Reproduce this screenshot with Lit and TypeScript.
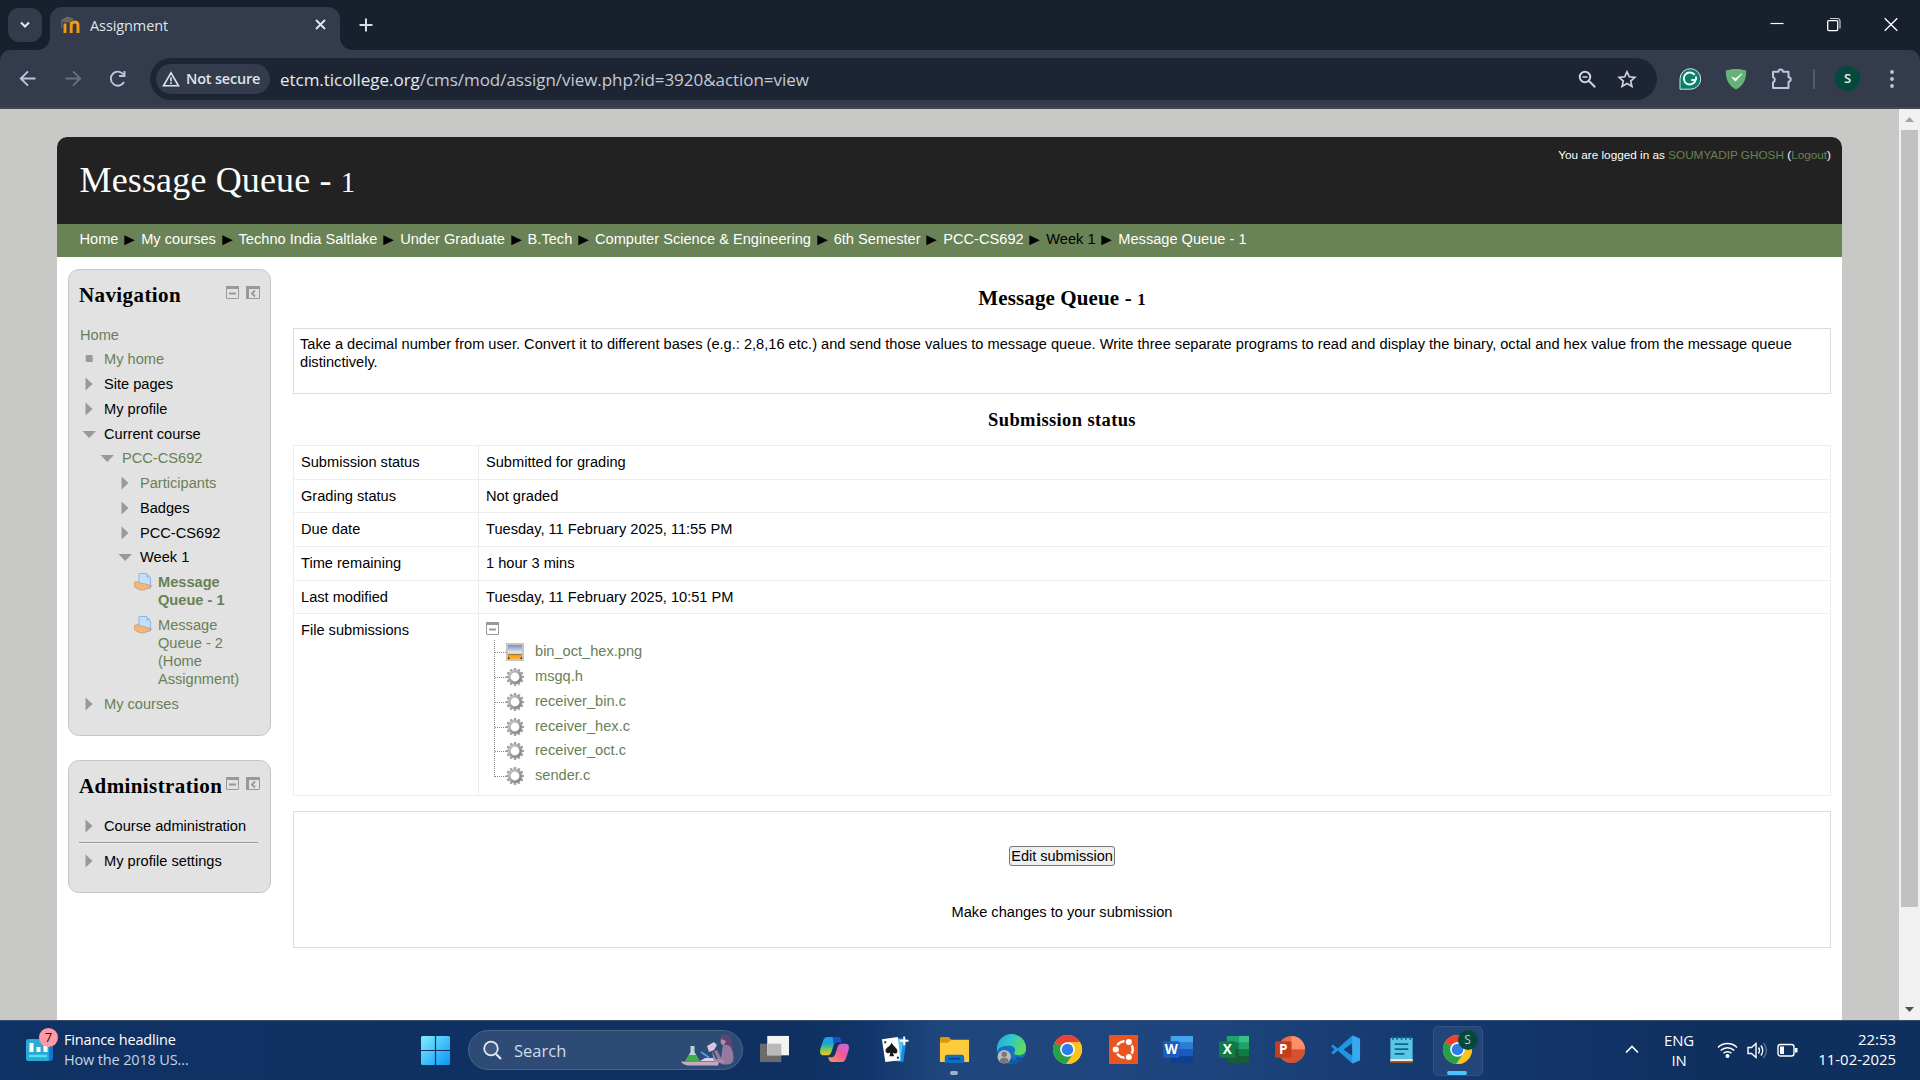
import { LitElement, html, css, svg } from "lit";
import { customElement } from "lit/decorators.js";
import { classMap } from "lit/directives/class-map.js";

@customElement("browser-chrome")
export class BrowserChrome extends LitElement {
  static styles = css`
    :host { display: block; font-family: "Open Sans", "Noto Sans", sans-serif; color: #dfe3ea; }
    svg { display: block; flex: none; }
    .tabs { display: flex; height: 50px; background: #18202e; }
    .drop { width: 34px; height: 34px; margin: 8px 0 0 8px; border-radius: 11px; background: #333b4c; display: grid; place-items: center; }
    .tab { position: relative; display: flex; align-items: center; width: 290px; height: 43px; margin: 7px 0 0 8px; box-sizing: border-box; padding: 0 13px 8px 11px; border-radius: 12px 12px 0 0; background: #333b4c; }
    .tab::before, .tab::after { content: ""; position: absolute; bottom: 0; width: 12px; height: 12px; }
    .tab::before { left: -12px; background: radial-gradient(circle at 0 0, #18202e 11.5px, #333b4c 12px); }
    .tab::after { right: -12px; background: radial-gradient(circle at 100% 0, #18202e 11.5px, #333b4c 12px); }
    .title { flex: 1; margin-left: 10px; font-size: 14.5px; letter-spacing: -0.1px; padding-top: 1px; }
    .plus { margin: 18px 0 0 19px; }
    .wins { margin: 16px 22px 0 auto; display: flex; gap: 43px; }
    .corner { background: #18202e; }
    .bar { display: flex; align-items: center; height: 57px; background: #333b4c; border-bottom: 2px solid #434855; border-radius: 10px 10px 0 0; box-sizing: content-box; }
    .nav { display: flex; gap: 21px; margin-left: 16px; }
    .omni { display: flex; align-items: center; box-sizing: border-box; width: 1507px; height: 42px; margin-left: 20px; padding: 0 20px 0 6px; border-radius: 21px; background: #1d2535; }
    .chip { display: flex; align-items: center; gap: 6px; width: 114px; height: 30px; box-sizing: border-box; padding-left: 6px; border-radius: 15px; background: #333b4c; font-size: 14.5px; font-weight: 600; letter-spacing: -0.2px; white-space: nowrap; }
    .url { flex: 1; margin-left: 10px; font-size: 17px; letter-spacing: -0.04px; color: #c5cad3; white-space: nowrap; padding-top: 1px; }
    .host { color: #e6e9ef; }
    .tools { display: flex; gap: 21px; }
    .ext { display: flex; align-items: center; gap: 24px; margin-left: 22px; }
    .sep { width: 2px; height: 20px; margin-left: -4px; margin-right: -3px; background: #505a6d; }
    .ava { width: 25px; height: 25px; border-radius: 50%; background: #04493c; color: #e4efe9; font-size: 13px; font-weight: 600; line-height: 25px; text-align: center; margin-left: -1px; }
    .dots { margin-left: 6px; }
  `;
  render() {
    return html`
      <div class="tabs">
        <div class="drop"><svg width="12" height="10" viewBox="0 0 12 10"><path d="M2 2.5l4 4 4-4" fill="none" stroke="#e6e9ef" stroke-width="2"/></svg></div>
        <div class="tab">
          <svg width="19" height="18" viewBox="0 0 19 18">
            <path d="M4 17V7.500M10.200 17V6M10.200 9c0-4 6.800-4 6.800 0v8" fill="none" stroke="#f59a15" stroke-width="2.900"/>
            <path d="M.5 4.500L6 1.200l6 1.500L8 5.500 4.500 6zM.8 5v7" fill="#66635c" stroke="#77736a" stroke-width="1"/>
          </svg>
          <span class="title">Assignment</span>
          <svg width="13" height="13" viewBox="0 0 13 13"><path d="M2 2l9 9M11 2l-9 9" stroke="#e6e9ef" stroke-width="1.800"/></svg>
        </div>
        <svg class="plus" width="14" height="14" viewBox="0 0 14 14"><path d="M7 .5v13M.5 7h13" stroke="#d5deee" stroke-width="2"/></svg>
        <div class="wins">
          <svg width="14" height="16" viewBox="0 0 14 16"><path d="M.5 7.500h13" stroke="#fff" stroke-width="1.200"/></svg>
          <svg width="14" height="16" viewBox="0 0 14 16"><path d="M3 2.500h7.500a2.500 2.500 0 0 1 2.500 2.500v7.500" fill="none" stroke="#c9cdd4" stroke-width="1.200"/><rect x=".7" y="4.600" width="10" height="10" rx="1" fill="none" stroke="#fff" stroke-width="1.300"/></svg>
          <svg width="14" height="16" viewBox="0 0 14 16"><path d="M.7 2.200l12.600 12.600M13.300 2.200L.7 14.800" stroke="#fff" stroke-width="1.300"/></svg>
        </div>
      </div>
      <div class="corner"><div class="bar">
        <div class="nav">
          <svg width="24" height="24" viewBox="0 0 24 24"><path d="M19.500 11.500H5M12 4.300L4.800 11.500l7.200 7.200" fill="none" stroke="#bac7dd" stroke-width="1.900"/></svg>
          <svg width="24" height="24" viewBox="0 0 24 24"><path d="M4.500 11.500H19M12 4.300l7.200 7.200-7.200 7.200" fill="none" stroke="#687082" stroke-width="1.900"/></svg>
          <svg width="24" height="24" viewBox="0 0 24 24"><path d="M18 15a7 7 0 1 1-.6-7.600M18.500 4v5h-5.400" fill="none" stroke="#bac7dd" stroke-width="1.900"/></svg>
        </div>
        <div class="omni">
          <div class="chip">
            <svg width="18" height="16" viewBox="0 0 18 16"><path d="M9 1.800L16.500 14.800h-15z" fill="none" stroke="#dfe3ea" stroke-width="1.600"/><path d="M9 6.300v4M9 11.300v1.700" stroke="#dfe3ea" stroke-width="1.600"/></svg>
            Not secure
          </div>
          <div class="url"><span class="host">etcm.ticollege.org</span>/cms/mod/assign/view.php?id=3920&amp;action=view</div>
          <div class="tools">
            <svg width="18" height="18" viewBox="0 0 18 18"><g fill="none" stroke="#cfd2da" stroke-width="2"><circle cx="7" cy="7" r="5.200"/><path d="M11 11l6.200 6.200"/><path d="M4.500 7h5" stroke-width="1.600"/></g></svg>
            <svg width="20" height="18" viewBox="0 0 20 18" ><path d="M10 1.800l2.300 5 5.500.5-4.100 3.700 1.200 5.400L10 13.600l-4.900 2.800 1.200-5.400L2.200 7.300l5.500-.5z" fill="none" stroke="#cfd2da" stroke-width="1.700"/></svg>
          </div>
        </div>
        <div class="ext">
          <svg width="22" height="22" viewBox="0 0 22 22"><path d="M11.500.7a10.200 10.200 0 1 1 0 20.500H1V11A10.300 10.300 0 0 1 11.500.7z" fill="#08806b" stroke="#cde5df" stroke-width="1"/><path d="M15.600 6.900a6 6 0 1 0 1 5.100h-4.300M17 8.600v3.400" fill="none" stroke="#fff" stroke-width="1.900"/></svg>
          <svg width="22" height="22" viewBox="0 0 22 22"><path d="M11 .9c4 0 7 .6 10.200 1.600C21.200 12 18.500 17.500 11 21.500 3.500 17.500.8 12 .8 2.500 4 1.500 7 .9 11 .9z" fill="#67b279"/><path d="M6.800 9l3.600 4.200 6.400-7.400-6.200 5z" fill="#fff" stroke="#fff" stroke-width=".8"/></svg>
          <svg width="22" height="22" viewBox="0 0 22 22"><path d="M2 3.700h5.500a2.200 2.200 0 0 1 4.400 0h5.600v5.600a2.200 2.200 0 0 1 0 4.400v6.300H2v-5.500a3 3 0 0 0 0-5.500z" fill="none" stroke="#bac7dd" stroke-width="2" stroke-linejoin="round"/></svg>
          <div class="sep"></div>
          <div class="ava">S</div>
          <svg class="dots" width="4" height="20" viewBox="0 0 4 20"><g fill="#bac7dd"><circle cx="2" cy="3" r="1.900"/><circle cx="2" cy="10" r="1.900"/><circle cx="2" cy="17" r="1.900"/></g></svg>
        </div>
      </div></div>
    `;
  }
}

type Mark = "none" | "dot" | "right" | "down" | "task";
interface NavItem { text: string; depth: number; mark: Mark; link?: boolean; bold?: boolean; }

const navItems: NavItem[] = [
  { text: "My home", depth: 0, mark: "dot", link: true },
  { text: "Site pages", depth: 0, mark: "right" },
  { text: "My profile", depth: 0, mark: "right" },
  { text: "Current course", depth: 0, mark: "down" },
  { text: "PCC-CS692", depth: 1, mark: "down", link: true },
  { text: "Participants", depth: 2, mark: "right", link: true },
  { text: "Badges", depth: 2, mark: "right" },
  { text: "PCC-CS692", depth: 2, mark: "right" },
  { text: "Week 1", depth: 2, mark: "down" },
  { text: "Message Queue - 1", depth: 3, mark: "task", link: true, bold: true },
  { text: "Message Queue - 2 (Home Assignment)", depth: 3, mark: "task", link: true },
  { text: "My courses", depth: 0, mark: "right", link: true },
];

const crumbs = ["Home", "My courses", "Techno India Saltlake", "Under Graduate", "B.Tech",
  "Computer Science & Engineering", "6th Semester", "PCC-CS692", "Week 1", "Message Queue - 1"];

const statusRows: [string, string][] = [
  ["Submission status", "Submitted for grading"],
  ["Grading status", "Not graded"],
  ["Due date", "Tuesday, 11 February 2025, 11:55 PM"],
  ["Time remaining", "1 hour 3 mins"],
  ["Last modified", "Tuesday, 11 February 2025, 10:51 PM"],
];

const files = ["bin_oct_hex.png", "msgq.h", "receiver_bin.c", "receiver_hex.c", "receiver_oct.c", "sender.c"];

const minusIcon = html`<svg width="13" height="13" viewBox="0 0 13 13"><rect x=".5" y=".5" width="12" height="12" rx=".5" fill="none" stroke="#999"/><path d="M0 0h13v3H0z" fill="#999"/><path d="M3 7.500h7" stroke="#999" stroke-width="2"/></svg>`;
const dockIcon = html`<svg width="14" height="13" viewBox="0 0 14 13"><rect x=".5" y=".5" width="13" height="12" rx=".5" fill="none" stroke="#999"/><path d="M0 0h14v3H0zM0 0h3v13H0z" fill="#999"/><path d="M9 4.500L6 7.500l3 3" fill="none" stroke="#999" stroke-width="1.900"/></svg>`;

const marks = {
  none: "",
  dot: html`<svg width="18" height="18" viewBox="0 0 18 18"><rect x="5.700" y="5" width="7" height="7" rx="1" fill="#999"/></svg>`,
  right: html`<svg width="18" height="18" viewBox="0 0 18 18"><path d="M5.500 2.500L12.500 9l-7 6.500z" fill="#999"/></svg>`,
  down: html`<svg width="18" height="18" viewBox="0 0 18 18"><path d="M2.500 6h13.500L9.200 13z" fill="#999"/></svg>`,
  task: html`<svg width="18" height="18" viewBox="0 0 18 18"><path d="M5 .5h7.500l4 4V15H5z" fill="#c3e0f8" stroke="#8fb4ec"/><path d="M12.500.5v4h4z" fill="#8ec0f2"/><path d="M.3 9.500c3-1.500 4.500-.5 6.500.5 2 1 5 .4 6 1.600l4.800 1.200c-1 2-3.500 2-5 3-3 2-7 2-12.300-2.300z" fill="#efb883" stroke="#c98f55" stroke-width=".7"/></svg>`,
};

const teeth = Array.from({ length: 12 }, (_, i) =>
  svg`<path d="M7.900 0h2.200l.5 4H7.400z" transform="rotate(${i * 30} 9 9)"/>`);
const gearIcon = html`<svg width="18" height="18" viewBox="0 0 18 18"><defs><linearGradient id="gear" x1="0" y1="0" x2="1" y2="1"><stop offset="0" stop-color="#c8c8c8"/><stop offset="1" stop-color="#7d7d7d"/></linearGradient></defs><g fill="#a2a2a2">${teeth}</g><circle cx="9" cy="9" r="5.700" fill="none" stroke="url(#gear)" stroke-width="2.600"/></svg>`;
const pictureIcon = html`<svg width="18" height="18" viewBox="0 0 18 18"><defs><linearGradient id="dusk" x1="0" y1="0" x2="0" y2="1"><stop offset="0" stop-color="#6f93c7"/><stop offset=".55" stop-color="#e8eaea"/><stop offset=".62" stop-color="#f6c85c"/><stop offset=".7" stop-color="#8a6420"/><stop offset=".75" stop-color="#f2a014"/><stop offset="1" stop-color="#f7b73a"/></linearGradient></defs><path d="M0 0h18v18H0z" fill="#c6c6c6"/><path d="M2 2h14v14H2z" fill="url(#dusk)"/><path d="M2 13.500l2 2.500H2zM16 13.500L14 16h2z" fill="#3a2a12"/></svg>`;

@customElement("course-page")
export class CoursePage extends LitElement {
  static styles = css`
    :host { display: flex; height: 911px; background: #c8c8c6; font-family: "Liberation Sans", Arial, sans-serif; font-size: 14.62px; line-height: 18px; color: #000; overflow: hidden; }
    svg { display: block; flex: none; }
    .view { flex: 1; padding: 28px 57px 0; }
    .card { height: 883px; background: #fff; border-radius: 10px 10px 0 0; overflow: hidden; }
    .head { display: flex; justify-content: space-between; height: 87px; background: #222; color: #fff; box-sizing: border-box; padding: 0 11px 0 22.500px; }
    h1, h2, h3 { margin: 0; font-family: Georgia, "Liberation Serif", serif; white-space: nowrap; }
    h1 { font-size: 36px; font-weight: 400; line-height: 40px; margin-top: 23px; letter-spacing: 0.15px; }
    .one { font-size: 0.8em; line-height: 0; }
    .login { font-size: 11.750px; line-height: 16px; margin-top: 10px; white-space: nowrap; }
    .login .link { color: #698255; }
    .link { color: #698056; }
    .crumbs { display: flex; align-items: center; height: 33px; padding: 0 22.500px 3px; box-sizing: border-box; background: #698256; color: #fff; white-space: nowrap; }
    .arrow { margin: 1px 5.850px 0; }
    .dark { color: #000; }
    .cols { display: flex; align-items: flex-start; gap: 22px; padding: 12px 11px 0; }
    .side { width: 203px; display: flex; flex-direction: column; gap: 24px; flex: none; }
    .block { box-sizing: border-box; border: 1px solid #c6c6c6; border-radius: 11px; background: #e2e2e2; padding: 15px 10px 0; }
    .navblock { height: 467px; }
    .admblock { height: 133px; }
    .bhead { display: flex; justify-content: space-between; height: 24px; }
    .bhead .icons { display: flex; gap: 7px; padding-top: 1px; }
    h2 { font-size: 21px; line-height: 23px; letter-spacing: 0.4px; margin-top: -1px; width: 140px; }
    .list { display: flex; flex-direction: column; gap: 6.750px; margin-top: 16.700px; padding-left: 1px; }
    .item { display: flex; gap: 6px; padding-right: 15px; }
    .d1 { padding-left: 18px; }
    .d2 { padding-left: 36px; }
    .d3 { padding-left: 54px; }
    .bold { font-weight: 700; }
    .adm { padding-top: 17px; }
    .adm .item { padding: 0 0 0 1px; white-space: nowrap; }
    .rule { border-top: 1px solid #999; border-bottom: 1px solid #eee; margin: 7px 2px 8px 0; }
    .main { flex: 1; display: flex; flex-direction: column; min-width: 0; }
    .main h3 { text-align: center; }
    .h-a { font-size: 21px; line-height: 22px; height: 22px; padding: 18px 0 19px; letter-spacing: 0.120px; }
    .h-b { font-size: 18.500px; line-height: 20px; padding: 16px 0 15px; letter-spacing: 0.380px; }
    .intro { box-sizing: border-box; height: 66px; border: 1px solid #ddd; padding: 6px; }
    .grid { display: grid; grid-template-columns: 185px 1fr; border: 1px solid #eee; border-bottom: 0; height: 351px; box-sizing: border-box; grid-template-rows: repeat(5, 33.700px) 1fr; }
    .cell { border-bottom: 1px solid #eee; padding: 7px 7px 0; }
    .cell.k { border-right: 1px solid #eee; }
    .top { padding-top: 8px; }
    .tree { position: relative; display: flex; flex-direction: column; gap: 6.700px; padding: 8px 0 0 20px; }
    .tree::before { content: ""; position: absolute; left: 8px; top: 5px; height: 137px; border-left: 1px dotted #888; }
    .file { position: relative; display: flex; gap: 11px; height: 18px; }
    .file::before { content: ""; position: absolute; left: -11px; top: 9px; width: 11px; border-top: 1px dotted #888; }
    .file span { position: relative; top: -1px; }
    .edit { box-sizing: border-box; height: 137px; margin-top: 15px; border: 1px solid #ddd; display: flex; flex-direction: column; align-items: center; padding-top: 34px; gap: 37px; }
    button { box-sizing: border-box; height: 20px; width: 106px; padding: 0; border: 1px solid #767676; border-radius: 3px; background: #efefef; font: 14.500px/16px "Liberation Sans", Arial, sans-serif; color: #000; white-space: nowrap; }
    .scroll { width: 21px; background: #f1f1f1; display: flex; flex-direction: column; align-items: center; justify-content: space-between; }
    .scroll .thumb { width: 17px; height: 777px; background: #c1c1c1; margin-bottom: auto; }
    .scroll .btn { height: 21px; display: grid; place-items: center; }
  `;
  render() {
    return html`
      <div class="view"><div class="card">
        <div class="head">
          <h1>Message Queue - <span class="one">1</span></h1>
          <div class="login">You are logged in as <span class="link">SOUMYADIP GHOSH</span> (<span class="link">Logout</span>)</div>
        </div>
        <div class="crumbs">
          ${crumbs.map((c, i) => html`${i ? html`<svg class="arrow" width="11" height="12" viewBox="0 0 11 12"><path d="M.3 1.200L10.800 6.200.3 11.200z"/></svg>` : ""}<span class=${classMap({ dark: c === "Week 1" })}>${c}</span>`)}
        </div>
        <div class="cols">
          <div class="side">
            <div class="block navblock">
              <div class="bhead"><h2>Navigation</h2><div class="icons">${minusIcon}${dockIcon}</div></div>
              <div class="list">
                <div class="link">Home</div>
                ${navItems.map((n) => html`<div class=${classMap({ item: true, ["d" + n.depth]: true, link: !!n.link, bold: !!n.bold })}>${marks[n.mark]}<span>${n.text}</span></div>`)}
              </div>
            </div>
            <div class="block admblock">
              <div class="bhead"><h2>Administration</h2><div class="icons">${minusIcon}${dockIcon}</div></div>
              <div class="adm">
                <div class="item">${marks.right}<span>Course administration</span></div>
                <div class="rule"></div>
                <div class="item">${marks.right}<span>My profile settings</span></div>
              </div>
            </div>
          </div>
          <div class="main">
            <h3 class="h-a">Message Queue - <span class="one">1</span></h3>
            <div class="intro">Take a decimal number from user. Convert it to different bases (e.g.: 2,8,16 etc.) and send those values to message queue. Write three separate programs to read and display the binary, octal and hex value from the message queue distinctively.</div>
            <h3 class="h-b">Submission status</h3>
            <div class="grid">
              ${statusRows.map(([k, v]) => html`<div class="cell k">${k}</div><div class="cell">${v}</div>`)}
              <div class="cell k">File submissions</div>
              <div class="cell top">${minusIcon}
                <div class="tree">${files.map((f, i) => html`<div class="file">${i ? gearIcon : pictureIcon}<span class="link">${f}</span></div>`)}</div>
              </div>
            </div>
            <div class="edit"><button>Edit submission</button><div>Make changes to your submission</div></div>
          </div>
        </div>
      </div></div>
      <div class="scroll">
        <div class="btn"><svg width="9" height="5" viewBox="0 0 9 5"><path d="M0 5L4.500 0 9 5z" fill="#a3a3a3"/></svg></div>
        <div class="thumb"></div>
        <div class="btn"><svg width="9" height="5" viewBox="0 0 9 5"><path d="M0 0l4.500 5L9 0z" fill="#505050"/></svg></div>
      </div>
    `;
  }
}

const chromeIcon = svg`
  <circle cx="16" cy="16" r="15" fill="#fbc116"/>
  <path d="M16 16L3 8.500A15 15 0 0 0 14.500 30.900L22.500 19.700z" fill="#26a148"/>
  <path d="M16 16L3 8.500A15 15 0 0 1 29 8.500H16z" fill="#ea4335"/>
  <path d="M16 8.500h13A15 15 0 0 1 15 31l7.500-11.500z" fill="#fcc31e"/>
  <circle cx="16" cy="16" r="7.500" fill="#fff"/><circle cx="16" cy="16" r="6" fill="#2f7de9"/>`;

const apps = [
  svg`<path d="M1 10h22v19H1z" fill="#6b6b6b"/><path d="M8.500 2h22.500v20H8.500z" fill="#f3f3f3"/><path d="M8.500 10h14.500v12H8.500z" fill="#b9b9b9"/>`,
  svg`<defs>
      <linearGradient id="cpA" x1="0" y1="0" x2="0" y2="1"><stop offset="0" stop-color="#1f9cf0"/><stop offset=".35" stop-color="#16a5d8"/><stop offset=".7" stop-color="#7ccb4a"/><stop offset="1" stop-color="#f4c62d"/></linearGradient>
      <linearGradient id="cpB" x1="1" y1="0" x2="0" y2="1"><stop offset="0" stop-color="#b76cf5"/><stop offset=".45" stop-color="#f0579a"/><stop offset="1" stop-color="#fb9a4a"/></linearGradient></defs>
    <path d="M9 3h9c3 0 4 2 4.500 5h-3c-3 0-4 2-5 5.500L13 18c-1 3-2 4-5 4H5c-4 0-4.500-3-3.500-7L4 7.500C5 4 6.500 3 9 3z" fill="url(#cpA)"/>
    <path d="M14 3h5c3 0 3.500 2 4 5h-4c-2.500 0-3.500 1-4 3z" fill="#1b4fd0"/>
    <path d="M23 29h-9c-3 0-4-2-4.500-5h3c3 0 4-2 5-5.500L19 14c1-3 2-4 5-4h3c4 0 4.500 3 3.500 7L28 24.500C27 28 25.500 29 23 29z" fill="url(#cpB)"/>`,
  svg`<path d="M16 4l12.500 1L25 29l-8-1z" fill="#1490df"/><path d="M20 5l5 .500L22 28l-4-1z" fill="#55c5f7"/><path d="M3 5.500L19.500 3l2.500 24-15.500 2z" fill="#fff"/><path d="M13 9c2 4 6 5.500 6 8.700 0 2.500-3 3.300-4.800 1.300l1.500 4h-5l1-4c-2 1.500-5 .8-5-1.700C6.700 14 11.500 13 13 9z" fill="#191919"/><path d="M5.500 7.500h2v2h-2zM18.500 23.500h2v2h-2z" fill="#222"/><path d="M26 2.500v9M21.500 7h9" stroke="#fff" stroke-width="2"/>`,
  svg`<path d="M1 5c0-1.500.5-2 2-2h7l4 4v6H1z" fill="#d99a07"/><path d="M1 9h8l4-3h18v23H1z" fill="#fdcb3b"/><path d="M6 30v-6c0-1.500 1-2.500 2.500-2.500h15c1.500 0 2.500 1 2.500 2.500v6z" fill="#0c6fc4"/><path d="M10 25.500h12" stroke="#0a3f85" stroke-width="1.500"/>`,
  svg`<defs><linearGradient id="edA" x1="0" y1="0" x2="1" y2=".4"><stop offset="0" stop-color="#2a9fe0"/><stop offset=".5" stop-color="#31c7c9"/><stop offset="1" stop-color="#5fdc5f"/></linearGradient></defs>
    <circle cx="16" cy="16" r="15" fill="#1372c4"/><path d="M22 21c-3 3 3 5 8.500 2l3 5-8 5H20z" fill="#1e467d"/><path d="M1 16A15 15 0 0 1 31 14c.5 5-3 8-7 8-5 0-6.500-2-4.500-4 1-2-.5-6-5.500-6C8 12 3 13 1 18z" fill="url(#edA)"/><path d="M12 19c0 5 5 8 10 7.500 3 0 5-1 7-2.500-3 5-8 7-13 7-4-2-6-8-4-12z" fill="#115ba6"/>
    <circle cx="8.500" cy="23.500" r="7" fill="#b9b9b9"/><circle cx="8.500" cy="21" r="2.700" fill="#777"/><path d="M4 28c0-4.500 9-4.500 9 0-2 2.500-7 2.500-9 0z" fill="#777"/>`,
  chromeIcon,
  svg`<path d="M1 1h30v30H1z" fill="#e9541f"/><circle cx="17" cy="16" r="8.600" fill="none" stroke="#fff" stroke-width="2.600"/><g fill="#fff" stroke="#e9541f" stroke-width="1.500"><circle cx="8" cy="16" r="3.900"/><circle cx="21.500" cy="8.300" r="3.900"/><circle cx="21.500" cy="23.700" r="3.900"/></g>`,
  svg`<path d="M8 2h23v7H8z" fill="#41a5ee"/><path d="M8 9h23v7H8z" fill="#2b7cd3"/><path d="M8 16h23v7H8z" fill="#185abd"/><path d="M8 23h23v7H8z" fill="#103f91"/><rect y="7.500" width="17" height="17" rx="1.500" fill="#1a5dbe"/><text x="8.500" y="20.500">W</text>`,
  svg`<path d="M8 2h12v7H8zM20 9h11v7H20z" fill="#21a366"/><path d="M20 2h11v7H20z" fill="#33c481"/><path d="M8 9h12v7H8zM20 16h11v7H20z" fill="#107c41"/><path d="M8 16h12v14H8zM20 23h11v7H20z" fill="#185c37"/><rect y="7.500" width="17" height="17" rx="1.500" fill="#107c41"/><text x="8.500" y="20.500">X</text>`,
  svg`<circle cx="17" cy="16" r="14" fill="#ed6c47"/><path d="M17 2a14 14 0 0 1 14 14H17z" fill="#ff8f6b"/><path d="M31 16a14 14 0 0 1-28 0z" fill="#d35230"/><rect y="7.500" width="17" height="17" rx="1.500" fill="#c43e1c"/><text x="8.500" y="20.500">P</text>`,
  svg`<path d="M23 1.500l8 3.500v22l-8 3.500L8 17l-4.500 4L1 19.500 4.500 16 1 12.500 3.500 11 8 15z" fill="#2096e0"/><path d="M23 9.500v13L14 16z" fill="#173d74"/><path d="M23 1.500l8 3.500v22l-8 3.500z" fill="#38a9f0"/>`,
  svg`<path d="M4.500 4h23v25h-23z" fill="#5cc4e4"/><path d="M4.500 27h23v3h-23z" fill="#8f4d1f"/><path d="M4.500 26h23v2h-23z" fill="#e9eef0"/><path d="M7 2v4M11.500 2v4M16 2v4M20.500 2v4M25 2v4" stroke="#0c5f88" stroke-width="1.600"/><path d="M9 10.500h14M9 15.500h14M9 20.500h10" stroke="#05698f" stroke-width="1.800"/>`,
  svg`${chromeIcon}`,
];

@customElement("task-bar")
export class TaskBar extends LitElement {
  static styles = css`
    :host { display: flex; align-items: flex-start; height: 60px; box-sizing: border-box; border-top: 1px solid #35506f; background: linear-gradient(90deg, #0f3264 0, #0f3061 800px, #12366b 870px, #1f477e 940px, #1e457d 1200px, #14396f 1430px, #123468 1560px, #0f2f5f 1700px); font-family: "Open Sans", "Noto Sans", sans-serif; color: #fff; }
    svg { display: block; flex: none; }
    .widget { position: relative; display: flex; gap: 10px; width: 420px; padding: 9px 0 0 26px; box-sizing: border-box; }
    .badge { position: absolute; left: 39px; top: 7px; width: 19px; height: 19px; border-radius: 50%; background: #ff99a4; color: #111; font-size: 13px; line-height: 19px; text-align: center; }
    .widget svg { margin-top: 8px; }
    .news { font-size: 14.5px; line-height: 20px; letter-spacing: -0.15px; white-space: nowrap; }
    .sub { color: #c6d2e4; }
    .start { margin: 15px 0 0 1px; }
    .search { display: flex; align-items: center; box-sizing: border-box; width: 275px; height: 40px; margin: 9px 0 0 18px; padding: 0 6px 0 14px; border-radius: 20px; border: 1px solid #4a6487; background: #2e4b76; font-size: 16.5px; color: #d5dbe6; }
    .search span { flex: 1; margin-left: 12px; }
    .apps { display: flex; margin-left: 1px; padding-top: 5px; }
    .app { position: relative; display: flex; justify-content: center; width: 55.700px; height: 50px; padding-top: 8px; box-sizing: border-box; }
    .wide { width: 60px; }
    .app text { font: 700 14px "Open Sans", sans-serif; fill: #fff; text-anchor: middle; }
    .active::before { content: ""; position: absolute; left: 3px; top: 0; width: 48px; height: 48px; border: 1px solid #34517f; border-radius: 5px; background: #234679; z-index: 0; }
    .app svg { position: relative; }
    .run { position: absolute; bottom: 1px; left: 50%; margin-left: -4px; width: 8px; height: 4px; border-radius: 2px; background: #9fb0c8; }
    .on { width: 20px; margin-left: -10px; background: #4cc2ff; }
    .who { position: absolute; left: 28px; top: 4px; width: 20px; height: 20px; border-radius: 50%; background: #04493c; color: #b9d3ca; font-size: 12px; line-height: 20px; text-align: center; }
    .tray { display: flex; margin-left: auto; padding-right: 24px; font-size: 14.900px; line-height: 20px; letter-spacing: -0.1px; }
    .up { margin: 23px 24px 0 0; }
    .lang { text-align: center; padding-top: 9px; margin-right: 22px; width: 32px; }
    .sys { display: flex; gap: 9px; padding-top: 19px; margin-right: 18px; }
    .clock { text-align: right; padding-top: 8px; width: 80px; white-space: nowrap; letter-spacing: 0; }
  `;
  render() {
    return html`
      <div class="widget">
        <svg width="28" height="24" viewBox="0 0 28 24"><rect x="4" y="3" width="23" height="20" rx="3" fill="#1b73cf"/><rect y="1" width="23" height="22" rx="2.500" fill="#2aa9d5"/><path d="M5.500 5v9M12.500 9v5M19.500 7v7" stroke="#fff" stroke-width="4"/><path d="M3 18h18" stroke="#4fe3f7" stroke-width="2.400"/></svg>
        <div class="badge">7</div>
        <div class="news"><div>Finance headline</div><div class="sub">How the 2018 US...</div></div>
      </div>
      <svg class="start" width="29" height="29" viewBox="0 0 29 29"><defs><linearGradient id="win" x1="0" y1="0" x2="1" y2="1"><stop offset="0" stop-color="#7fefff"/><stop offset="1" stop-color="#0a94f5"/></linearGradient></defs><path d="M0 1.500Q0 0 1.500 0H13.900v13.900H0zM15.100 0H27.500Q29 0 29 1.500v12.400H15.100zM0 15.100h13.900V29H1.500Q0 29 0 27.500zM15.100 15.100H29v12.400q0 1.500-1.500 1.500H15.100z" fill="url(#win)"/></svg>
      <div class="search">
        <svg width="19" height="20" viewBox="0 0 19 20"><circle cx="8" cy="8.500" r="6.800" fill="#3f5a82" stroke="#e6eaf0" stroke-width="1.800"/><path d="M13 14l5 5" stroke="#e6eaf0" stroke-width="2.200"/></svg>
        <span>Search</span>
        <svg width="56" height="32" viewBox="0 0 56 32">
          <path d="M1 27.500h38l-1 4H8q-5-.5-7-4z" fill="#c9a9c4"/><path d="M20 27l5-3h8l3 3z" fill="#ddd0e8"/>
          <path d="M10.500 12h4v6l5 9H5.500l5-9z" fill="#b9d6d2"/><path d="M9 21h7l3.500 6H5.500z" fill="#3fae49"/>
          <path d="M21 18l8 5.500" stroke="#4aa7e8" stroke-width="1.700"/>
          <path d="M27 12l7-4 3 3-3 5-5 2z" fill="#d9c6dc"/>
          <path d="M40 4c0-5 11-5 11 2 0 4 1 6 4 7l-5 1-5-3z" fill="#5e4670"/><path d="M41 5c-1 4 0 6 3 6l2-4z" fill="#b98ba0"/>
          <path d="M43 11c6-1 9 2 10 8 1 6 1 9-3 11-4 1-9 1-11-2l-5-11 3-1 4 8z" fill="#95799f"/><path d="M32 17l4 8 8 1v3l-10-1z" fill="#a98ca8"/>
        </svg>
      </div>
      <div class="apps">
        ${apps.map((a, i) => html`<div class=${classMap({ app: true, wide: i < 4, active: i === 12 })}>
          <svg width="31" height="31" viewBox="0 0 32 32">${a}</svg>
          ${i === 3 ? html`<div class="run"></div>` : ""}
          ${i === 12 ? html`<div class="who">S</div><div class="run on"></div>` : ""}
        </div>`)}
      </div>
      <div class="tray">
        <svg class="up" width="14" height="10" viewBox="0 0 14 10"><path d="M1 8.500l6-6 6 6" fill="none" stroke="#fff" stroke-width="1.700"/></svg>
        <div class="lang">ENG<br>IN</div>
        <div class="sys">
          <svg width="21" height="20" viewBox="0 0 21 20"><g fill="none" stroke="#fff" stroke-width="1.500"><path d="M1 7.500a13.500 13.500 0 0 1 19 0M3.700 10.500a9.600 9.600 0 0 1 13.600 0M6.500 13.300a5.700 5.700 0 0 1 8 0"/></g><circle cx="10.500" cy="16" r="2" fill="#fff"/></svg>
          <svg width="21" height="20" viewBox="0 0 21 20"><g fill="none" stroke="#fff" stroke-width="1.400"><path d="M1 7.500h3.500L9 3.500v14l-4.500-4H1z"/><path d="M11.500 7.500q2 3 0 6M14 5.500q3.500 5 0 10"/><path d="M16.500 3q6 7.500 0 15" stroke="#5a7197"/></g></svg>
          <svg width="21" height="20" viewBox="0 0 21 20"><rect x="1" y="4.500" width="16" height="11.500" rx="2.500" fill="none" stroke="#fff" stroke-width="1.400"/><path d="M3 6.500h4v7.500H3zM18 8h2.500v4.500H18z" fill="#fff"/></svg>
        </div>
        <div class="clock">22:53<br>11-02-2025</div>
      </div>
    `;
  }
}

@customElement("app-root")
export class AppRoot extends LitElement {
  static styles = css`
    :host { display: block; width: 1920px; height: 1080px; overflow: hidden; background: #fff; }
  `;
  render() {
    return html`<browser-chrome></browser-chrome><course-page></course-page><task-bar></task-bar>`;
  }
}
